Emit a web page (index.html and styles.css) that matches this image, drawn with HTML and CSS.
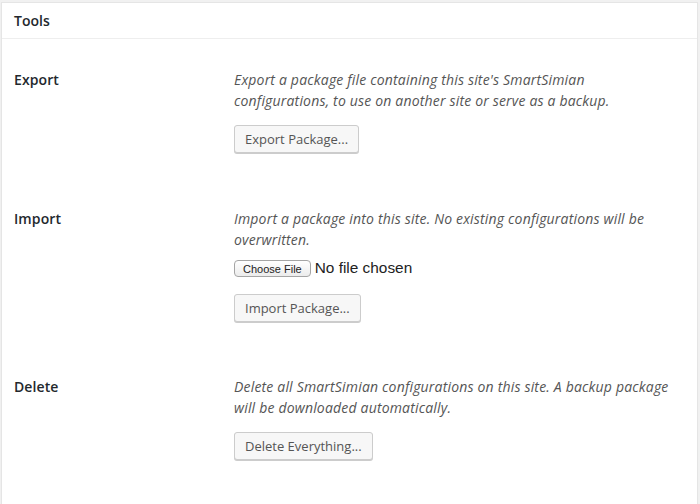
FILE: index.html
```html
<!DOCTYPE html>
<html>
<head>
<meta charset="utf-8">
<link rel="stylesheet" href="styles.css">
</head>
<body>
<div class="postbox">
  <h2 class="hndle">Tools</h2>
  <div class="inside">
    <div class="row">
      <div class="label">Export</div>
      <div class="field">
        <p class="description">Export a package file containing this site's SmartSimian configurations, to use on another site or serve as a backup.</p>
        <button class="button btn-export" type="button">Export Package...</button>
      </div>
    </div>
    <div class="row">
      <div class="label">Import</div>
      <div class="field">
        <p class="description">Import a package into this site. No existing configurations will be overwritten.</p>
        <div class="file-row"><input class="file-input" type="file"></div>
        <button class="button btn-import" type="button">Import Package...</button>
      </div>
    </div>
    <div class="row">
      <div class="label">Delete</div>
      <div class="field">
        <p class="description">Delete all SmartSimian configurations on this site. A backup package will be downloaded automatically.</p>
        <button class="button btn-export" type="button">Delete Everything...</button>
      </div>
    </div>
  </div>
</div>
</body>
</html>
```
FILE: styles.css
```css
html, body {
  margin: 0;
  padding: 0;
  background: #f1f1f1;
  overflow: hidden;
}
body {
  font-family: "Open Sans", "Liberation Sans", sans-serif;
  font-size: 14px;
  color: #444;
  padding-top: 2px;
}
.postbox {
  margin: 0 2px 0 1px;
  background: #fff;
  border: 1px solid #e5e5e5;
  box-shadow: 0 1px 1px rgba(0,0,0,0.04);
  min-height: 540px;
}
.hndle {
  margin: 0;
  font-size: 14px;
  font-weight: 600;
  line-height: 19px;
  padding: 8px 12px;
  color: #23282d;
  border-bottom: 1px solid #eee;
}
.inside {
  padding: 30px 20px 0 12px;
}
.row {
  display: flex;
  margin-bottom: 54.5px;
}
.label {
  flex: none;
  width: 220px;
  font-weight: 600;
  line-height: 21px;
  color: #23282d;
  letter-spacing: 0.1px;
}
.field {
  flex: 1;
  min-width: 0;
}
.description {
  margin: 0;
  font-style: italic;
  color: #555;
  line-height: 21px;
  letter-spacing: 0.18px;
}
.button {
  display: block;
  height: 28px;
  margin-top: 14px;
  padding: 0 10px 1px;
  font-family: "Open Sans", "Liberation Sans", sans-serif;
  font-size: 13px;
  line-height: 26px;
  color: #555;
  background: #f7f7f7;
  border: 1px solid #ccc;
  border-radius: 3px;
  box-shadow: 0 1px 0 #ccc;
  cursor: pointer;
}
.file-row {
  display: flex;
  align-items: center;
  height: 17px;
  margin-top: 10px;
}
.file-input {
  font-family: "Liberation Sans", sans-serif;
  font-size: 15.4px;
  color: #222;
}
.file-input::file-selector-button {
  font-family: "Liberation Sans", sans-serif;
  font-size: 11px;
  height: 17px;
  padding: 0 8px;
  margin-right: 4px;
  border: 1px solid #a5a5a5;
  border-radius: 4px;
  background: linear-gradient(#ffffff, #ececec);
  color: #222;
}
.btn-import {
  margin-top: 17px;
}
```
